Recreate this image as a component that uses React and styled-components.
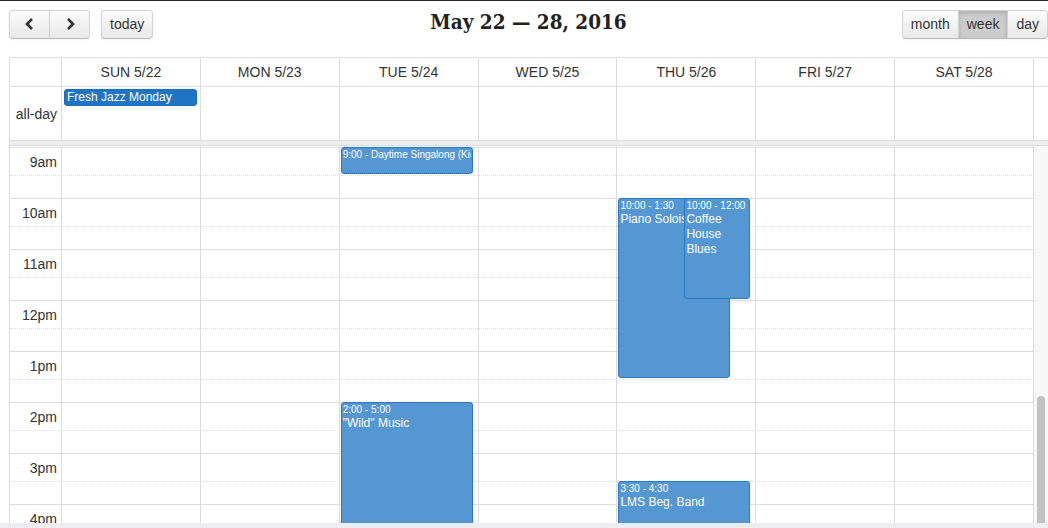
import React from "react"
import styled, { createGlobalStyle } from "styled-components"

const GlobalStyle = createGlobalStyle`
  html, body {
    margin: 0;
    padding: 0;
    background: #fff;
  }
  body {
    font-family: "Liberation Sans", Arial, sans-serif;
    color: #333;
  }
`

const days = ["SUN 5/22", "MON 5/23", "TUE 5/24", "WED 5/25", "THU 5/26", "FRI 5/27", "SAT 5/28"]
const hours = ["9am", "10am", "11am", "12pm", "1pm", "2pm", "3pm", "4pm"]

// one hour = 28px slot (with label) + 23px half slot
const HOUR = 51
const FIRST_HALF = 28
const slotY = t => {
  const h = Math.floor(t)
  return 1 + (h - 9) * HOUR + (t - h >= 0.5 ? FIRST_HALF : 0)
}

const events = [
  { day: 2, start: 9, end: 9.5, time: "9:00", title: "Daytime Singalong (Kids)", short: true },
  { day: 2, start: 14, end: 17, time: "2:00 - 5:00", title: "\"Wild\" Music" },
  { day: 4, start: 10, end: 13.5, time: "10:00 - 1:30", title: "Piano Soloist", right: 25 },
  { day: 4, start: 10, end: 12, time: "10:00 - 12:00", title: "Coffee House Blues", left: 67 },
  { day: 4, start: 15.5, end: 16.5, time: "3:30 - 4:30", title: "LMS Beg. Band" },
]

const cols = "52px repeat(7, 1fr) 14px"

const Chevron = ({ dir }) => (
  <svg width="16" height="16" viewBox="0 0 16 16">
    <path
      d={dir === "left" ? "M10 3 L5 8 L10 13" : "M6 3 L11 8 L6 13"}
      fill="none"
      stroke="#333"
      strokeWidth="2.6"
    />
  </svg>
)

const App = () => {
  return (
    <Page>
      <GlobalStyle />
      <Main>
        <Toolbar>
          <Left>
            <Group>
              <Button $first $icon>
                <Chevron dir="left" />
              </Button>
              <Button $last $icon>
                <Chevron dir="right" />
              </Button>
            </Group>
            <Button $first $last>today</Button>
          </Left>
          <Title>May 22 — 28, 2016</Title>
          <Right>
            <Group>
              <Button $first>month</Button>
              <Button $active>week</Button>
              <Button $last>day</Button>
            </Group>
          </Right>
        </Toolbar>

        <Calendar>
          <HeadRow>
            <HeadCell />
            {days.map(d => (
              <HeadCell key={d}>{d}</HeadCell>
            ))}
            <HeadCell $gutter />
          </HeadRow>

          <AllDayRow>
            <AxisCell>all-day</AxisCell>
            {days.map((d, i) => (
              <DayCell key={d}>
                {i === 0 && <AllDayEvent>Fresh Jazz Monday</AllDayEvent>}
              </DayCell>
            ))}
            <DayCell $gutter />
          </AllDayRow>

          <Divider />

          <TimeBody>
            <SlotArea>
              <Spacer />
              {hours.map(h => (
                <React.Fragment key={h}>
                  <HourRow>
                    <SlotLabel>{h}</SlotLabel>
                  </HourRow>
                  <HalfRow />
                </React.Fragment>
              ))}

              <ColumnsLayer>
                <AxisColumn />
                {days.map((d, i) => (
                  <DayColumn key={d}>
                    {events
                      .filter(e => e.day === i)
                      .map(e => {
                        const top = slotY(e.start)
                        const height = slotY(e.end) - top - 1
                        return (
                          <TimedEvent
                            key={e.title}
                            $left={e.left}
                            $right={e.right}
                            style={{ top, height }}
                          >
                            {e.short ? (
                              <ShortLine>
                                {e.time} - {e.title}
                              </ShortLine>
                            ) : (
                              <>
                                <EventTime>{e.time}</EventTime>
                                <EventTitle>{e.title}</EventTitle>
                              </>
                            )}
                          </TimedEvent>
                        )
                      })}
                  </DayColumn>
                ))}
              </ColumnsLayer>
            </SlotArea>
            <ScrollTrack>
              <ScrollThumb />
            </ScrollTrack>
          </TimeBody>
        </Calendar>
      </Main>
      <BottomStrip />
    </Page>
  )
}

const Page = styled.div`
  height: 528px;
  box-sizing: border-box;
  border-top: 1px solid #262626;
  display: flex;
  flex-direction: column;
  overflow: hidden;
`

const Main = styled.div`
  flex: 1;
  min-height: 0;
  display: flex;
  flex-direction: column;
  padding-left: 9px;
`

const Toolbar = styled.div`
  display: grid;
  grid-template-columns: 1fr auto 1fr;
  align-items: center;
  height: 30px;
  margin: 8px 0 18px;
`

const Left = styled.div`
  display: flex;
  gap: 11px;
  justify-self: start;
`

const Right = styled.div`
  justify-self: end;
`

const Group = styled.div`
  display: flex;
`

const Button = styled.button`
  height: 29px;
  padding: 0 8px;
  margin-left: ${p => (p.$first ? 0 : "-1px")};
  display: flex;
  align-items: center;
  justify-content: center;
  width: ${p => (p.$icon ? "41px" : "auto")};
  font-family: "Liberation Sans", Arial, sans-serif;
  font-size: 14px;
  color: #333;
  border: 1px solid #d2d2d2;
  border-bottom-color: #b9b9b9;
  border-radius: ${p =>
    p.$first && p.$last ? "4px" : p.$first ? "4px 0 0 4px" : p.$last ? "0 4px 4px 0" : "0"};
  background: ${p => (p.$active ? "#cccccc" : "linear-gradient(#fdfdfd, #e8e8e8)")};
  box-shadow: ${p =>
    p.$active
      ? "inset 0 2px 4px rgba(0, 0, 0, 0.15), 0 1px 2px rgba(0, 0, 0, 0.05)"
      : "inset 0 1px 0 rgba(255, 255, 255, 0.2), 0 1px 2px rgba(0, 0, 0, 0.05)"};
  cursor: pointer;
`

const Title = styled.h2`
  margin: 0 0 5px;
  font-family: "DejaVu Serif Condensed", "DejaVu Serif", serif;
  font-weight: 700;
  font-size: 20.5px;
  color: #222;
  white-space: nowrap;
`

const Calendar = styled.div`
  flex: 1;
  min-height: 0;
  display: flex;
  flex-direction: column;
  border-top: 1px solid #ddd;
  border-left: 1px solid #ddd;
`

const HeadRow = styled.div`
  display: grid;
  grid-template-columns: ${cols};
  height: 29px;
  box-sizing: border-box;
  border-bottom: 1px solid #ddd;
`

const HeadCell = styled.div`
  display: flex;
  align-items: center;
  justify-content: center;
  font-size: 14px;
  color: #333;
  border-right: ${p => (p.$gutter ? "none" : "1px solid #ddd")};
`

const AllDayRow = styled.div`
  display: grid;
  grid-template-columns: ${cols};
  height: 54px;
  box-sizing: border-box;
  border-bottom: 1px solid #ddd;
`

const AxisCell = styled.div`
  display: flex;
  align-items: center;
  justify-content: flex-end;
  padding-right: 4px;
  font-size: 14px;
  color: #333;
  border-right: 1px solid #ddd;
`

const DayCell = styled.div`
  border-right: ${p => (p.$gutter ? "none" : "1px solid #ddd")};
  min-width: 0;
`

const AllDayEvent = styled.div`
  margin: 2px 3px 0 2px;
  height: 17px;
  box-sizing: border-box;
  padding: 0 2px;
  background: #1f74c3;
  border: 1px solid #1d6db8;
  border-radius: 3px;
  color: #fff;
  font-size: 12px;
  line-height: 15px;
  white-space: nowrap;
  overflow: hidden;
`

const Divider = styled.div`
  height: 5px;
  box-sizing: border-box;
  background: #eee;
  border-bottom: 1px solid #ddd;
`

const TimeBody = styled.div`
  flex: 1;
  min-height: 0;
  display: flex;
  overflow: hidden;
`

const SlotArea = styled.div`
  flex: 1;
  position: relative;
`

const Spacer = styled.div`
  height: 1px;
`

const HourRow = styled.div`
  height: 28px;
  box-sizing: border-box;
  border-top: 1px solid #ddd;
  display: flex;
  align-items: center;
`

const HalfRow = styled.div`
  height: 23px;
  box-sizing: border-box;
  border-top: 1px dotted #ddd;
`

const SlotLabel = styled.div`
  width: 52px;
  box-sizing: border-box;
  padding-right: 5px;
  text-align: right;
  font-size: 14px;
  color: #333;
`

const ColumnsLayer = styled.div`
  position: absolute;
  inset: 0;
  display: grid;
  grid-template-columns: 52px repeat(7, 1fr);
`

const AxisColumn = styled.div`
  border-right: 1px solid #ddd;
`

const DayColumn = styled.div`
  position: relative;
  border-right: 1px solid #ddd;
  min-width: 0;
`

const TimedEvent = styled.div`
  position: absolute;
  left: ${p => p.$left ?? 1}px;
  right: ${p => p.$right ?? 5}px;
  box-sizing: border-box;
  padding: 0 1px;
  background: #5597d3;
  border: 1px solid #2b78c3;
  border-radius: 3px;
  color: #fff;
  overflow: hidden;
`

const EventTime = styled.div`
  font-size: 10px;
  line-height: 13px;
  white-space: nowrap;
  overflow: hidden;
`

const EventTitle = styled.div`
  font-size: 12px;
  line-height: 15px;
`

const ShortLine = styled.div`
  font-size: 10px;
  line-height: 13px;
  white-space: nowrap;
  overflow: hidden;
`

const ScrollTrack = styled.div`
  width: 14px;
  box-sizing: border-box;
  padding: 250px 3px 0 3px;
  background: #f7f7f7;
  display: flex;
  flex-direction: column;
`

const ScrollThumb = styled.div`
  flex: 1;
  background: #c1c1c1;
  border-radius: 4px 4px 0 0;
`

const BottomStrip = styled.div`
  height: 5px;
  flex: none;
  background: #eeeef2;
`

export default App
